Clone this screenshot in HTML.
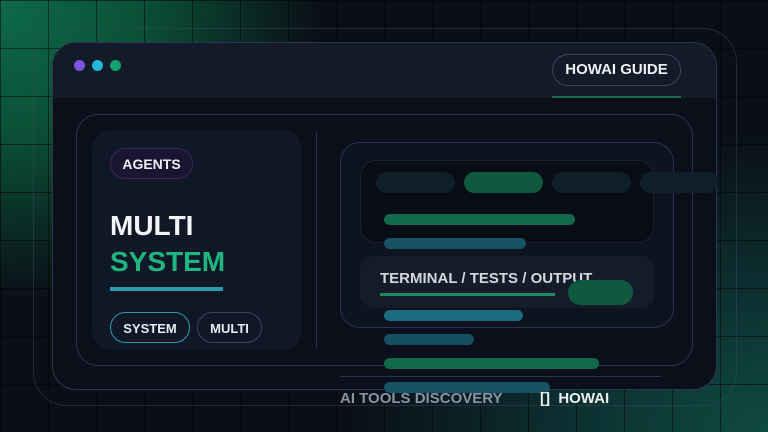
<!DOCTYPE html>
<html><head><style>
*{margin:0;padding:0;box-sizing:border-box}
body{width:768px;height:432px;overflow:hidden;position:relative;font-family:"Liberation Sans",sans-serif;font-weight:bold;
background:
radial-gradient(ellipse 320px 300px at 0px 0px,#0e6a4a 0%,#0b5036 45%,rgba(11,16,26,0) 100%),
radial-gradient(ellipse 420px 300px at 768px 432px,#0f4a42 0%,#0c2e30 50%,rgba(11,16,26,0) 100%),
#0a0f17;}
.grid{position:absolute;inset:0;background-image:linear-gradient(to right,rgba(0,0,0,.5) 1px,transparent 1px),linear-gradient(to bottom,rgba(0,0,0,.5) 1px,transparent 1px);background-size:48px 48px}
.a{position:absolute}
.pill{position:absolute;border-radius:999px}
</style></head><body>
<div class="grid"></div>
<div class="a" style="left:33px;top:28px;width:704px;height:378px;border:1px solid rgba(60,75,100,.45);border-radius:34px"></div>
<div class="a" style="left:52px;top:42px;width:665px;height:348px;border-radius:24px;background:#0b0f1a;border:1px solid #2c3652;overflow:hidden">
  <div class="a" style="left:0;top:0;width:665px;height:55px;background:#131a28"></div>
</div>
<div class="pill" style="left:74px;top:60px;width:11px;height:11px;background:#7b55e0"></div>
<div class="pill" style="left:92px;top:60px;width:11px;height:11px;background:#1fb8d6"></div>
<div class="pill" style="left:110px;top:60px;width:11px;height:11px;background:#12a06c"></div>
<div class="pill" style="left:552px;top:54px;width:129px;height:32px;border:1px solid #3a4560;color:#eef0f4;font-size:15px;line-height:30px;text-align:center">HOWAI GUIDE</div>
<div class="a" style="left:552px;top:96px;width:129px;height:2px;background:#1e6a52"></div>

<div class="a" style="left:76px;top:114px;width:617px;height:252px;border:1px solid #2a3350;border-radius:22px"></div>
<div class="a" style="left:92px;top:130px;width:209px;height:220px;background:#101827;border-radius:18px"></div>
<div class="a" style="left:316px;top:132px;width:1px;height:216px;background:#2a3350"></div>
<div class="pill" style="left:110px;top:148px;width:83px;height:31px;background:#1a1530;border:1px solid #362a58;color:#eef0f4;font-size:14px;line-height:31px;text-align:center">AGENTS</div>
<div class="a" style="left:110px;top:209px;font-size:28px;color:#f2f4f7;line-height:34px">MULTI</div>
<div class="a" style="left:110px;top:245px;font-size:28px;color:#1fb57f;line-height:34px">SYSTEM</div>
<div class="a" style="left:110px;top:287px;width:113px;height:4px;background:#2a9bb0"></div>
<div class="pill" style="left:110px;top:312px;width:80px;height:31px;border:1px solid #2a9bb0;color:#e8ebf0;font-size:13px;line-height:31px;text-align:center">SYSTEM</div>
<div class="pill" style="left:197px;top:312px;width:65px;height:31px;border:1px solid #3a4560;color:#e8ebf0;font-size:13px;line-height:31px;text-align:center">MULTI</div>

<div class="a" style="left:340px;top:142px;width:334px;height:186px;border:1px solid #2a3350;border-radius:20px;background:#0e1320"></div>
<div class="a" style="left:360px;top:160px;width:294px;height:83px;border:1px solid #1a2030;border-radius:16px;background:#080c14"></div>
<div class="pill" style="left:376px;top:172px;width:79px;height:21px;background:#0f1f2a"></div>
<div class="pill" style="left:464px;top:172px;width:79px;height:21px;background:#0f5a3e"></div>
<div class="pill" style="left:552px;top:172px;width:79px;height:21px;background:#0f1f2a"></div>
<div class="pill" style="left:640px;top:172px;width:78px;height:21px;background:#0f1f2a"></div>
<div class="pill" style="left:384px;top:214px;width:191px;height:11px;background:#12694a"></div>
<div class="pill" style="left:384px;top:238px;width:142px;height:11px;background:#145264"></div>
<div class="a" style="left:360px;top:256px;width:295px;height:52px;border-radius:14px;background:#141b29"></div>
<div class="a" style="left:380px;top:270px;font-size:15px;color:#d4d8de;line-height:18px">TERMINAL / TESTS / OUTPUT</div>
<div class="a" style="left:380px;top:293px;width:175px;height:3px;background:#1e8a64"></div>
<div class="pill" style="left:568px;top:280px;width:65px;height:25px;background:#0f5a3e"></div>
<div class="pill" style="left:384px;top:310px;width:139px;height:11px;background:#1a6a80"></div>
<div class="pill" style="left:384px;top:334px;width:90px;height:11px;background:#134f60"></div>
<div class="pill" style="left:384px;top:358px;width:215px;height:11px;background:#12694a"></div>
<div class="a" style="left:340px;top:376px;width:321px;height:1px;background:#2a3350"></div>
<div class="pill" style="left:384px;top:382px;width:166px;height:11px;background:#145264"></div>
<div class="a" style="left:340px;top:390px;font-size:15px;color:#8a93a3;line-height:18px">AI TOOLS DISCOVERY</div>
<div class="a" style="left:540px;top:390px;font-size:15px;color:#eef0f4;line-height:18px">[]&nbsp;&nbsp;HOWAI</div>
</body></html>
